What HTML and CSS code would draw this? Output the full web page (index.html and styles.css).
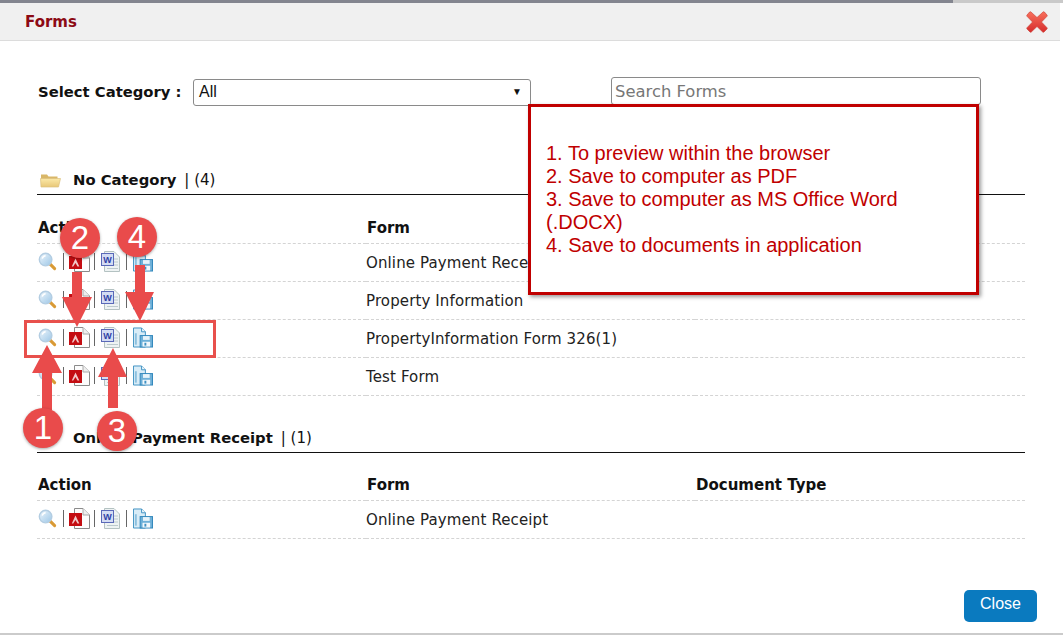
FILE: index.html
```html
<!DOCTYPE html>
<html lang="en">
<head>
<meta charset="utf-8">
<title>Forms</title>
<link rel="stylesheet" href="styles.css">
</head>
<body>
<svg class="defs" width="0" height="0" aria-hidden="true">
  <defs>
    <linearGradient id="lens" x1="0" y1="0" x2="1" y2="1"><stop offset="0" stop-color="#eef6fc"/><stop offset="1" stop-color="#9cc6e6"/></linearGradient>
    <linearGradient id="folderg" x1="0" y1="0" x2="0" y2="1"><stop offset="0" stop-color="#fbe9a8"/><stop offset="1" stop-color="#e8c777"/></linearGradient>
    <linearGradient id="xg" x1="0" y1="0" x2="0" y2="1"><stop offset="0" stop-color="#f8705c"/><stop offset="1" stop-color="#d62c2c"/></linearGradient>
    <symbol id="i-view" viewBox="0 0 20 20">
      <path d="M12.500 12.500l5 5" stroke="#d99a35" stroke-width="3.200" stroke-linecap="round"/>
      <circle cx="8" cy="8" r="6.600" fill="url(#lens)" stroke="#b3cde2" stroke-width="1.500"/>
      <path d="M4.500 7a4 4 0 0 1 3.500-3" fill="none" stroke="#fff" stroke-width="1.500"/>
    </symbol>
    <symbol id="i-pdf" viewBox="0 0 21 21">
      <path d="M5.500 .5H14l6.500 6.500V20.500H5.500z" fill="#fdfdfd" stroke="#8b8b8b"/>
      <path d="M14 .5V7h6.500" fill="#eee" stroke="#aaa"/>
      <rect x="0" y="5" width="13" height="13" fill="#c40d12"/>
      <path d="M6.500 7.500l3.800 8h-1.800l-2-3.400-2.300 3.400H2.800z" fill="#f2c9c9"/>
    </symbol>
    <symbol id="i-word" viewBox="0 0 19 21">
      <path d="M3.500 .5H13l5.500 5.500V20.500H3.500z" fill="#eef3f3" stroke="#b4c2c2"/>
      <path d="M13 8h4M13 11h4M13 14h4M6 17.500h11" stroke="#bccacd"/>
      <rect x=".5" y="2.500" width="12" height="12" fill="#d3dcf3" stroke="#5a69b8"/>
      <text class="icon-w" x="6.500" y="12">W</text>
    </symbol>
    <symbol id="i-save" viewBox="0 0 21 21">
      <path d="M.5 .5H9l4 4V20.500H.5z" fill="#d8ecf7" stroke="#3d90c2"/>
      <path d="M3 6v12" stroke="#8cc0de" stroke-width="2"/>
      <path d="M9 .5v4h4" fill="#eef7fb" stroke="#3d90c2"/>
      <rect x="7.500" y="8.500" width="13" height="12" fill="#6eb0d8" stroke="#2f86bb"/>
      <rect x="10.500" y="9" width="7" height="4" fill="#e6f3fa"/>
      <rect x="10" y="15" width="8" height="5" fill="#f2f8fc"/>
      <rect x="12" y="16" width="2" height="3" fill="#3d90c2"/>
    </symbol>
    <symbol id="i-folder" viewBox="0 0 21 16">
      <path d="M1 2.500h6l1.500 2h9v3H1z" fill="#d9b768"/>
      <path d="M1 15L.5 6.500H20.500L18.500 15z" fill="url(#folderg)" stroke="#dcc07e" stroke-width=".7"/>
    </symbol>
  </defs>
</svg>

<div class="topstrip"><div class="topstrip-dark"></div></div>
<main class="modal">
  <header class="modal-head">
    <h1 class="modal-title">Forms</h1>
    <button class="close-x" type="button" aria-label="Close">
      <svg width="22" height="22" viewBox="0 0 22 22"><path d="M5 1L11 6.500 17 1a1 1 0 0 1 1.400 0l2.600 3a1 1 0 0 1 0 1.300L15.500 11l5.500 5.700a1 1 0 0 1 0 1.300l-3 3a1 1 0 0 1-1.300 0L11 15.500 5.300 21a1 1 0 0 1-1.300 0l-3-3a1 1 0 0 1 0-1.300L6.500 11 1 5.300a1 1 0 0 1 0-1.300l2.600-3A1 1 0 0 1 5 1z" fill="url(#xg)" stroke="#c93a30" stroke-width=".6"/></svg>
    </button>
  </header>

  <div class="modal-body">
    <div class="filters">
      <label class="filter-label" for="cat">Select Category :</label>
      <div class="select-box" id="cat"><span>All</span><span class="caret">▼</span></div>
      <input class="search" type="text" placeholder="Search Forms">
    </div>

    <section class="group group-first">
      <h2 class="group-head"><svg class="folder"><use href="#i-folder"/></svg><b>No Category</b><span class="count">| (4)</span></h2>
      <table class="forms">
        <thead><tr><th class="c1">Action</th><th class="c2">Form</th><th></th></tr></thead>
        <tbody>
          <tr><td><div class="acts"><svg class="ic v"><use href="#i-view"/></svg><i></i><svg class="ic p"><use href="#i-pdf"/></svg><i></i><svg class="ic w"><use href="#i-word"/></svg><i></i><svg class="ic s"><use href="#i-save"/></svg></div></td><td>Online Payment Receipt</td><td></td></tr>
          <tr><td><div class="acts"><svg class="ic v"><use href="#i-view"/></svg><i></i><svg class="ic p"><use href="#i-pdf"/></svg><i></i><svg class="ic w"><use href="#i-word"/></svg><i></i><svg class="ic s"><use href="#i-save"/></svg></div></td><td>Property Information</td><td></td></tr>
          <tr><td><div class="acts"><svg class="ic v"><use href="#i-view"/></svg><i></i><svg class="ic p"><use href="#i-pdf"/></svg><i></i><svg class="ic w"><use href="#i-word"/></svg><i></i><svg class="ic s"><use href="#i-save"/></svg></div></td><td>PropertyInformation Form 326(1)</td><td></td></tr>
          <tr><td><div class="acts"><svg class="ic v"><use href="#i-view"/></svg><i></i><svg class="ic p"><use href="#i-pdf"/></svg><i></i><svg class="ic w"><use href="#i-word"/></svg><i></i><svg class="ic s"><use href="#i-save"/></svg></div></td><td>Test Form</td><td></td></tr>
        </tbody>
      </table>
    </section>

    <section class="group group-second">
      <h2 class="group-head group-head-plain"><b>Online Payment Receipt</b><span class="count">| (1)</span></h2>
      <table class="forms">
        <thead><tr><th class="c1">Action</th><th class="c2">Form</th><th>Document Type</th></tr></thead>
        <tbody>
          <tr><td><div class="acts"><svg class="ic v"><use href="#i-view"/></svg><i></i><svg class="ic p"><use href="#i-pdf"/></svg><i></i><svg class="ic w"><use href="#i-word"/></svg><i></i><svg class="ic s"><use href="#i-save"/></svg></div></td><td>Online Payment Receipt</td><td></td></tr>
        </tbody>
      </table>
    </section>

    <footer class="modal-foot"><button class="close-btn" type="button">Close</button></footer>
  </div>
</main>

<aside class="callout">
  1. To preview within the browser<br>
  2. Save to computer as PDF<br>
  3. Save to computer as MS Office Word (.DOCX)<br>
  4. Save to documents in application
</aside>

<div class="highlight"></div>
<svg class="arrows" width="170" height="260" viewBox="0 0 170 260" aria-hidden="true">
  <path d="M42 210V173H32L47 145 62 173H52V210z"/>
  <path d="M72 72V97H62L77 127 92 97H82V72z"/>
  <path d="M108 208V177H98L113 148 127 177H118V208z"/>
  <path d="M135 65V92H125L140 121 154 92H145V65z"/>
</svg>
<span class="num n1">1</span>
<span class="num n2">2</span>
<span class="num n3">3</span>
<span class="num n4">4</span>
<div class="edge-bottom"></div>
</body>
</html>
```
FILE: styles.css
```css
* { box-sizing: border-box; }
html, body { margin: 0; height: 100%; }
body {
  position: relative;
  width: 1063px;
  height: 635px;
  overflow: hidden;
  background: #fff;
  font-family: "DejaVu Sans", Verdana, sans-serif;
  font-size: 15px;
  color: #222;
}
.defs { position: absolute; }
.topstrip { height: 3px; background: #c9c9c9; }
.topstrip-dark { width: 953px; height: 3px; background: #83858f; }

.modal { width: 1060px; height: 630px; display: flex; flex-direction: column; background: #fff; }
.modal-head {
  flex: none;
  height: 38px;
  display: flex;
  align-items: center;
  justify-content: space-between;
  padding: 0 12px 0 25px;
  background: #f0f0f0;
  border-bottom: 1px solid #dcdcdc;
}
.modal-title { margin: 1px 0 0; font-size: 15px; font-weight: bold; color: #8c0a14; }
.close-x { padding: 0; border: 0; background: none; height: 22px; }

.modal-body { flex: 1; padding: 38px 35px 0 37px; display: flex; flex-direction: column; }
.filters { display: flex; align-items: center; height: 27px; }
.filter-label { width: 156px; padding: 0 0 2px 1px; font-size: 14.800px; font-weight: bold; color: #111; }
.select-box {
  width: 338px;
  height: 27px;
  display: flex;
  align-items: center;
  justify-content: space-between;
  padding: 0 8px 2px 5px;
  border: 1px solid #8a8a8a;
  border-radius: 3px;
  font-family: "Liberation Sans", Arial, sans-serif;
  font-size: 16px;
  color: #111;
}
.caret { font-size: 10px; }
.search {
  width: 370px;
  height: 28px;
  margin: -4px 0 0 80px;
  padding: 2px 3px 0;
  border: 1px solid #8a8a8a;
  border-radius: 3px;
  font-family: "DejaVu Sans", Verdana, sans-serif;
  font-size: 16.400px;
  outline: none;
}
.search::placeholder { color: #777; opacity: 1; }

.group-first { margin-top: 60px; }
.group-second { margin-top: 28px; }
.group-head {
  display: flex;
  align-items: baseline;
  height: 29px;
  margin: 0;
  padding-top: 5px;
  border-bottom: 1px solid #111;
  font-size: 15px;
  font-weight: normal;
  color: #111;
}
.group-head-plain { padding-left: 36px; }
.folder { align-self: center; width: 21px; height: 16px; margin: 0 12px 6px 3px; }
.group-head b { font-size: 14.800px; }
.count { margin-left: 8px; }

.forms { width: 100%; border-collapse: collapse; table-layout: fixed; }
.forms th {
  height: 48px;
  padding: 18px 0 0 1px;
  text-align: left;
  font-size: 15px;
  color: #111;
  border-bottom: 1px dashed #d4d4d4;
}
.forms th.c1, .forms td:first-child { width: 329px; }
.forms th.c2, .forms td:nth-child(2) { width: 329px; }
.forms td {
  height: 38px;
  padding: 1px 0 0;
  letter-spacing: .12px;
  color: #222;
  border-bottom: 1px dashed #d4d4d4;
}
.forms td:first-child { padding: 0 0 2px 1px; }

.acts { display: flex; align-items: center; height: 21px; }
.acts i { width: 1px; height: 17px; background: #666; }
.ic { flex: none; height: 21px; }
.ic.v { width: 19px; height: 19px; margin-right: 6px; }
.ic.p { width: 21px; margin: 0 4px 0 5px; }
.ic.w { width: 19px; margin: 0 6px 0 6px; }
.ic.s { width: 20px; margin-left: 6px; }

.modal-foot { margin-top: auto; display: flex; justify-content: flex-end; height: 43px; }
.close-btn {
  width: 73px;
  height: 32px;
  margin-right: -12px;
  padding: 0 0 5px;
  border: 0;
  border-radius: 5px;
  background: #0a7abf;
  color: #fff;
  font-family: "Liberation Sans", Arial, sans-serif;
  font-size: 16px;
}

.icon-w { font: bold 9px "Liberation Sans", sans-serif; fill: #2f3fa5; text-anchor: middle; }

/* annotations laid over the screenshot */
.callout {
  position: absolute;
  left: 528px;
  top: 104px;
  width: 451px;
  height: 191px;
  padding: 35px 30px 0 15px;
  background: #fff;
  border: 3px solid #c00000;
  box-shadow: 2px 2px 4px rgba(0, 0, 0, .4);
  font-family: "Liberation Sans", Arial, sans-serif;
  font-size: 20px;
  line-height: 23px;
  color: #c00000;
}
.highlight {
  position: absolute;
  left: 24px;
  top: 320px;
  width: 192px;
  height: 38px;
  border: 3px solid #e8504c;
}
.arrows { position: absolute; left: 0; top: 200px; fill: #e94b4b; }
.num {
  position: absolute;
  width: 40px;
  height: 40px;
  display: flex;
  align-items: center;
  justify-content: center;
  border-radius: 50%;
  background: #e94b4b;
  box-shadow: 0 1px 3px rgba(0, 0, 0, .35);
  font-family: "Liberation Sans", Arial, sans-serif;
  font-size: 33px;
  color: #fff;
}
.n1 { left: 23px; top: 408px; }
.n2 { left: 60px; top: 218px; }
.n3 { left: 97px; top: 411px; }
.n4 { left: 117px; top: 217px; }
.edge-bottom { position: absolute; left: 0; right: 0; bottom: 0; height: 2px; background: #cbcbcb; }
```
